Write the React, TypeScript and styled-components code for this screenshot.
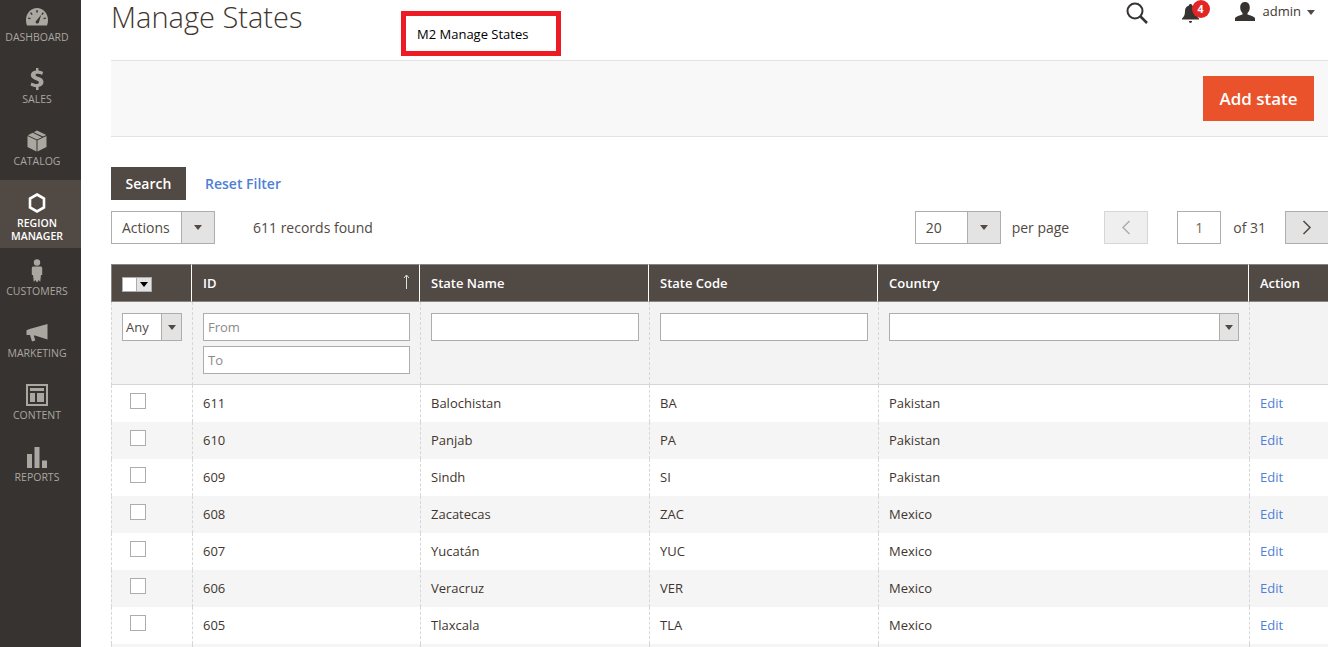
import React from "react";
import styled, { createGlobalStyle } from "styled-components";

const GlobalStyle = createGlobalStyle`
  html, body {
    margin: 0;
    padding: 0;
    height: 100%;
    overflow: hidden;
    background: #ffffff;
  }
  body {
    font-family: "Open Sans", "Liberation Sans", sans-serif;
    font-size: 14px;
    color: #41362f;
  }
  * {
    box-sizing: border-box;
  }
`;

const Page = styled.div`
  display: flex;
  position: relative;
  width: 1328px;
  height: 647px;
  overflow: hidden;
`;

const Sidebar = styled.nav`
  flex: 0 0 81px;
  background: #373330;
  display: flex;
  flex-direction: column;
`;

const NavItem = styled.div<{ $active?: boolean; $first?: boolean }>`
  height: ${(p) => (p.$active ? "68px" : p.$first ? "56px" : "62px")};
  background: ${(p) => (p.$active ? "#514943" : "transparent")};
  color: ${(p) => (p.$active ? "#ffffff" : "#aaa6a0")};
  display: flex;
  flex-direction: column;
  align-items: center;
  justify-content: flex-end;
  padding-right: 7px;
  padding-bottom: ${(p) => (p.$active ? "5px" : "12px")};
`;

const NavIcon = styled.div`
  height: 24px;
  margin-bottom: 2px;
  display: flex;
  align-items: center;
  justify-content: center;
  color: #aaa6a0;
`;

const NavLabel = styled.div<{ $active?: boolean }>`
  font-size: 10.5px;
  line-height: 13px;
  text-align: center;
  text-transform: uppercase;
  font-weight: ${(p) => (p.$active ? 600 : 400)};
`;

const Main = styled.main`
  flex: 1;
  min-width: 0;
  padding-left: 30px;
`;

const Header = styled.header`
  height: 60px;
  display: flex;
  justify-content: space-between;
`;

const Title = styled.h1`
  margin: 0;
  font-size: 29px;
  font-weight: 300;
  line-height: 34px;
  color: #41362f;
`;

const HeaderTools = styled.div`
  display: flex;
  align-items: flex-start;
  padding-right: 13px;
`;

const SearchIcon = styled.svg`
  width: 22px;
  height: 22px;
  margin-top: 2px;
  margin-right: 34px;
`;

const Bell = styled.div`
  position: relative;
  width: 17px;
  height: 22px;
  margin-top: 4px;
  margin-right: 36px;
`;

const Badge = styled.span`
  position: absolute;
  left: 10px;
  top: -4px;
  width: 18px;
  height: 18px;
  border-radius: 50%;
  background: #e22626;
  color: #ffffff;
  font-size: 10.5px;
  font-weight: 700;
  line-height: 18px;
  text-align: center;
`;

const UserIcon = styled.svg`
  width: 20px;
  height: 19px;
  margin-top: 2px;
  margin-right: 8px;
`;

const UserName = styled.span`
  font-size: 13px;
  line-height: 22px;
  color: #41362f;
  margin-right: 6px;
`;

const Caret = styled.span<{ $color?: string }>`
  display: inline-block;
  width: 0;
  height: 0;
  border-left: 4px solid transparent;
  border-right: 4px solid transparent;
  border-top: 5px solid ${(p) => p.$color || "#514943"};
`;

const UserCaret = styled(Caret)`
  margin-top: 10px;
`;

const Callout = styled.div`
  position: absolute;
  left: 401px;
  top: 11px;
  width: 160px;
  height: 45px;
  border: 5px solid #ed1c24;
  background: #ffffff;
  padding-left: 11px;
  font-size: 13px;
  line-height: 36px;
  color: #000000;
`;

const ActionBar = styled.div`
  height: 77px;
  background: #f8f8f8;
  border-top: 1px solid #e3e3e3;
  border-bottom: 1px solid #e3e3e3;
  display: flex;
  justify-content: flex-end;
  align-items: center;
  padding-right: 14px;
`;

const PrimaryButton = styled.button`
  width: 111px;
  height: 45px;
  border: 0;
  background: #e9522a;
  color: #ffffff;
  font-family: inherit;
  font-size: 17px;
  font-weight: 600;
`;

const FilterActions = styled.div`
  display: flex;
  align-items: center;
  margin-top: 30px;
`;

const SearchButton = styled.button`
  width: 75px;
  height: 33px;
  border: 0;
  background: #514943;
  color: #ffffff;
  font-family: inherit;
  font-size: 14px;
  font-weight: 600;
`;

const ResetLink = styled.a`
  margin-left: 19px;
  font-size: 14px;
  font-weight: 600;
  color: #4f7fd6;
`;

const Toolbar = styled.div`
  display: flex;
  align-items: center;
  height: 33px;
  margin-top: 11px;
  font-size: 14px;
  color: #514943;
`;

const Select = styled.div<{ $width: number; $height?: number }>`
  width: ${(p) => p.$width}px;
  height: ${(p) => p.$height || 33}px;
  display: flex;
  background: #ffffff;
  border: 1px solid #adadad;
`;

const SelectValue = styled.div<{ $inset?: number }>`
  flex: 1;
  min-width: 0;
  padding-left: ${(p) => p.$inset ?? 10}px;
  font-size: 14px;
  line-height: 31px;
  color: #514943;
`;

const SelectArrow = styled.div<{ $width: number }>`
  flex: 0 0 ${(p) => p.$width}px;
  background: #e3e3e3;
  border-left: 1px solid #adadad;
  display: flex;
  align-items: center;
  justify-content: center;
`;

const FilterValue = styled(SelectValue)`
  font-size: 13px;
  line-height: 26px;
`;

const RecordCount = styled.span`
  margin-left: 38px;
`;

const Pager = styled.div`
  margin-left: auto;
  margin-right: -1px;
  display: flex;
  align-items: center;
`;

const PagerText = styled.span<{ $left: number }>`
  margin-left: ${(p) => p.$left}px;
`;

const PageButton = styled.div<{ $disabled?: boolean; $left: number }>`
  width: 44px;
  height: 33px;
  margin-left: ${(p) => p.$left}px;
  background: ${(p) => (p.$disabled ? "#efefef" : "#e3e3e3")};
  border: 1px solid ${(p) => (p.$disabled ? "#d6d6d6" : "#adadad")};
  color: ${(p) => (p.$disabled ? "#adadad" : "#514943")};
  display: flex;
  align-items: center;
  justify-content: center;
`;

const PageInput = styled.div`
  width: 44px;
  height: 33px;
  margin-left: 29px;
  border: 1px solid #adadad;
  text-align: center;
  line-height: 31px;
  font-size: 14px;
  color: #7a6a55;
`;

const Grid = styled.table`
  width: 1217px;
  margin-top: 20px;
  border-collapse: separate;
  border-spacing: 0;
  table-layout: fixed;
  font-size: 13px;
`;

const HeadCell = styled.th<{ $first?: boolean; $last?: boolean }>`
  height: 38px;
  padding: 0 10px 0 ${(p) => (p.$first ? "10px" : "11px")};
  background: #514943;
  border-top: 1px solid #8a837f;
  border-bottom: 1px solid #8a837f;
  border-left: ${(p) => (p.$first ? "1px solid #8a837f" : "0")};
  border-right: ${(p) => (p.$last ? "0" : "1px solid #ffffff")};
  color: #ffffff;
  font-size: 13px;
  font-weight: 600;
  text-align: left;
  position: relative;
`;

const MasterCheck = styled.div`
  width: 30px;
  height: 15px;
  display: flex;
  background: #ffffff;
  border: 1px solid #adadad;
  margin-top: 2px;
`;

const MasterArrow = styled.div`
  margin-left: auto;
  width: 15px;
  background: #e3e3e3;
  border-left: 1px solid #adadad;
  display: flex;
  align-items: center;
  justify-content: center;
`;

const SortArrow = styled.svg`
  position: absolute;
  right: 9px;
  top: 9px;
  width: 7px;
  height: 15px;
`;

const FilterCell = styled.td`
  height: 83px;
  padding: 11px 10px 0;
  vertical-align: top;
  background: #f3f3f3;
  border-bottom: 1px solid #d6d6d6;
  border-left: 1px dashed #d6d6d6;
`;

const TextFilter = styled.div`
  height: 28px;
  background: #ffffff;
  border: 1px solid #adadad;
  padding-left: 4px;
  font-size: 13px;
  line-height: 26px;
  color: #8a8a8a;
  & + & {
    margin-top: 5px;
  }
`;

const Row = styled.tr<{ $even?: boolean }>`
  background: ${(p) => (p.$even ? "#f5f5f5" : "#ffffff")};
`;

const Cell = styled.td`
  height: 37px;
  padding: 0 10px 2px;
  border-left: 1px dashed #d6d6d6;
  color: #41362f;
  font-size: 13px;
  vertical-align: middle;
`;

const EditCell = styled(Cell)`
  color: #4f7fd6;
`;

const CheckCell = styled(Cell)`
  padding: 0 0 5px 18px;
`;

const Check = styled.div`
  width: 16px;
  height: 16px;
  background: #ffffff;
  border: 1px solid #adadad;
`;

const rows = [
  ["611", "Balochistan", "BA", "Pakistan"],
  ["610", "Panjab", "PA", "Pakistan"],
  ["609", "Sindh", "SI", "Pakistan"],
  ["608", "Zacatecas", "ZAC", "Mexico"],
  ["607", "Yucatán", "YUC", "Mexico"],
  ["606", "Veracruz", "VER", "Mexico"],
  ["605", "Tlaxcala", "TLA", "Mexico"],
];

const GaugeIcon = () => (
  <svg width="22" height="18" viewBox="0 0 22 18" fill="currentColor">
    <path
      fillRule="evenodd"
      d="M11 0C5 0 0 5 0 12c0 2 .4 4 1 5.500h20c.6-1.500 1-3.500 1-5.500C22 5 17 0 11 0zM11 2.200l.8 0v2.300h-1.600V2.300zM5.200 4.300l1.500 1.900-1 .8-1.600-1.800zM16.800 4.300l1.100.9-1.600 1.800-1-.8zM2.300 9.500l2.300.6-.3 1.200-2.300-.5zM19.700 9.500l.3 1.300-2.300.5-.3-1.200zM15.200 6.800l-2.300 7.400c-.3 1-1.100 1.500-2 1.300-1-.2-1.500-1.100-1.200-2z"
    />
  </svg>
);

const DollarIcon = () => (
  <svg width="14" height="22" viewBox="0 0 14 22" fill="currentColor">
    <path d="M6 0h2.400v2.500c1.900.2 3.500.7 4.700 1.400l-1 3c-1.300-.7-2.800-1.200-4.400-1.200-1.400 0-2.200.5-2.200 1.300 0 .9 1 1.300 3 2 3.100 1 5 2.300 5 5 0 2.500-1.800 4.400-4.900 4.900V22H6v-2.800c-2.100-.2-4.200-.8-5.500-1.700l1-3.100c1.500.9 3.300 1.500 5 1.500 1.500 0 2.400-.6 2.400-1.500 0-.9-.9-1.400-2.800-2.100C2.800 11 .8 9.700.8 7.100.8 4.700 2.600 2.900 6 2.500z" />
  </svg>
);

const BoxIcon = () => (
  <svg width="20" height="22" viewBox="0 0 20 22" fill="currentColor">
    <path d="M9.500 10.200v11.300L.5 17V6zM10.500 10.200l9-4.200v11l-9 4.500zM6.700 2.200L10 .5l9.300 4.500-3.300 1.600zM5.600 2.800l9.300 4.400-4.900 2.200L.8 5.200z" />
  </svg>
);

const HexagonIcon = () => (
  <svg width="18" height="20" viewBox="0 0 18 20" fill="none" stroke="#ffffff" strokeWidth="2.600">
    <path d="M9 1.500l7 4v9l-7 4-7-4v-9z" />
  </svg>
);

const PersonIcon = () => (
  <svg width="12" height="24" viewBox="0 0 12 24" fill="currentColor">
    <circle cx="6" cy="3.500" r="3.200" />
    <path d="M2.500 7.500h7c1 0 1.700.7 1.700 1.700V16h-1.200l-.8 7-1.500-2-1.700 2.500L4.300 21l-1.500 2-.8-7H.8V9.200c0-1 .7-1.700 1.700-1.700z" />
  </svg>
);

const MegaphoneIcon = () => (
  <svg width="22" height="18" viewBox="0 0 22 18" fill="currentColor">
    <path d="M21.500 0v15.500L9 11.500H7.800l1.500 5-3.300 1-2-6.500H.5V6.200l3-1.200z" />
  </svg>
);

const LayoutIcon = () => (
  <svg width="22" height="22" viewBox="0 0 22 22" fill="currentColor">
    <path
      fillRule="evenodd"
      d="M0 0h22v22H0zM2 2v18h18V2zM4 4h14v3H4zM4 9h5v9H4zM11 9h7v9h-7z"
    />
  </svg>
);

const BarsIcon = () => (
  <svg width="20" height="21" viewBox="0 0 20 21" fill="currentColor">
    <path d="M0 7h5v14H0zM7.500 0h5v21h-5zM15 13.500h5V21h-5z" />
  </svg>
);

const navItems = [
  { label: "Dashboard", icon: <GaugeIcon /> },
  { label: "Sales", icon: <DollarIcon /> },
  { label: "Catalog", icon: <BoxIcon /> },
  { label: "Region Manager", icon: <HexagonIcon />, active: true },
  { label: "Customers", icon: <PersonIcon /> },
  { label: "Marketing", icon: <MegaphoneIcon /> },
  { label: "Content", icon: <LayoutIcon /> },
  { label: "Reports", icon: <BarsIcon /> },
];

const App = () => {
  return (
    <Page>
      <GlobalStyle />
      <Sidebar>
        {navItems.map((item, i) => (
          <NavItem key={item.label} $active={item.active} $first={i === 0}>
            <NavIcon>{item.icon}</NavIcon>
            <NavLabel $active={item.active}>{item.label}</NavLabel>
          </NavItem>
        ))}
      </Sidebar>
      <Main>
        <Header>
          <Title>Manage States</Title>
          <HeaderTools>
            <SearchIcon viewBox="0 0 22 22" fill="none" stroke="#373330" strokeWidth="2">
              <circle cx="9" cy="9" r="7.500" />
              <path d="M14.500 14.500l6.500 6.500" strokeWidth="2.500" />
            </SearchIcon>
            <Bell>
              <svg width="17" height="19" viewBox="0 0 17 19" fill="#373330">
                <path d="M8.500 0c1 0 1.500.6 1.500 1.400C12.500 2 14 4 14 7c0 4 1.200 6 3 7.500V15.500H0v-1C1.800 13 3 11 3 7c0-3 1.500-5 4-5.600C7 .6 7.500 0 8.500 0zM7 17h3c0 1-.6 2-1.500 2S7 18 7 17z" />
              </svg>
              <Badge>4</Badge>
            </Bell>
            <UserIcon viewBox="0 0 20 19" fill="#373330">
              <path d="M10 0c3 0 4.800 2.200 4.800 5.500 0 2.500-1 4.300-2.300 5.500v1.500c3 1 6.500 2 7.500 3.500V19H0v-3c1-1.500 4.500-2.500 7.500-3.500V11C6.200 9.800 5.200 8 5.200 5.500 5.200 2.200 7 0 10 0z" />
            </UserIcon>
            <UserName>admin</UserName>
            <UserCaret />
          </HeaderTools>
        </Header>
        <ActionBar>
          <PrimaryButton>Add state</PrimaryButton>
        </ActionBar>
        <FilterActions>
          <SearchButton>Search</SearchButton>
          <ResetLink>Reset Filter</ResetLink>
        </FilterActions>
        <Toolbar>
          <Select $width={104}>
            <SelectValue>Actions</SelectValue>
            <SelectArrow $width={33}>
              <Caret />
            </SelectArrow>
          </Select>
          <RecordCount>611 records found</RecordCount>
          <Pager>
            <Select $width={86}>
              <SelectValue>20</SelectValue>
              <SelectArrow $width={33}>
                <Caret />
              </SelectArrow>
            </Select>
            <PagerText $left={11}>per page</PagerText>
            <PageButton $disabled $left={35}>
              <svg width="10" height="15" viewBox="0 0 10 15" fill="none" stroke="currentColor" strokeWidth="1.500">
                <path d="M8.500 1L2 7.500 8.500 14" />
              </svg>
            </PageButton>
            <PageInput>1</PageInput>
            <PagerText $left={12}>of 31</PagerText>
            <PageButton $left={19}>
              <svg width="10" height="15" viewBox="0 0 10 15" fill="none" stroke="currentColor" strokeWidth="1.500">
                <path d="M1.500 1L8 7.500 1.500 14" />
              </svg>
            </PageButton>
          </Pager>
        </Toolbar>
        <Grid>
          <colgroup>
            <col style={{ width: 81 }} />
            <col style={{ width: 228 }} />
            <col style={{ width: 229 }} />
            <col style={{ width: 229 }} />
            <col style={{ width: 371 }} />
            <col style={{ width: 79 }} />
          </colgroup>
          <thead>
            <tr>
              <HeadCell $first>
                <MasterCheck>
                  <MasterArrow>
                    <Caret $color="#000000" />
                  </MasterArrow>
                </MasterCheck>
              </HeadCell>
              <HeadCell>
                ID
                <SortArrow viewBox="0 0 7 15" fill="none" stroke="#cfe6e2" strokeWidth="1">
                  <path d="M3.500 15V1M1 4l2.500-3L6 4" />
                </SortArrow>
              </HeadCell>
              <HeadCell>State Name</HeadCell>
              <HeadCell>State Code</HeadCell>
              <HeadCell>Country</HeadCell>
              <HeadCell $last>Action</HeadCell>
            </tr>
            <tr>
              <FilterCell>
                <Select $width={60} $height={28}>
                  <FilterValue $inset={3}>Any</FilterValue>
                  <SelectArrow $width={20}>
                    <Caret />
                  </SelectArrow>
                </Select>
              </FilterCell>
              <FilterCell>
                <TextFilter>From</TextFilter>
                <TextFilter>To</TextFilter>
              </FilterCell>
              <FilterCell>
                <TextFilter />
              </FilterCell>
              <FilterCell>
                <TextFilter />
              </FilterCell>
              <FilterCell>
                <Select $width={350} $height={28}>
                  <FilterValue />
                  <SelectArrow $width={19}>
                    <Caret />
                  </SelectArrow>
                </Select>
              </FilterCell>
              <FilterCell />
            </tr>
          </thead>
          <tbody>
            {rows.map((row, i) => (
              <Row key={row[0]} $even={i % 2 === 1}>
                <CheckCell>
                  <Check />
                </CheckCell>
                {row.map((value) => (
                  <Cell key={value}>{value}</Cell>
                ))}
                <EditCell>Edit</EditCell>
              </Row>
            ))}
            <Row $even>
              <Cell />
              <Cell />
              <Cell />
              <Cell />
              <Cell />
              <Cell />
            </Row>
          </tbody>
        </Grid>
      </Main>
      <Callout>M2 Manage States</Callout>
    </Page>
  );
};

export default App;
